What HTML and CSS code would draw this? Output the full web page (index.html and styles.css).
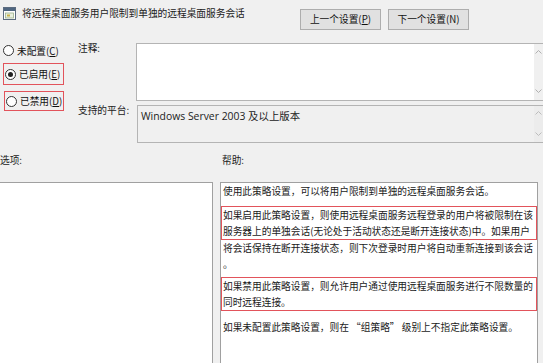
FILE: index.html
```html
<!DOCTYPE html>
<html lang="zh-CN">
<head>
<meta charset="utf-8">
<title>将远程桌面服务用户限制到单独的远程桌面服务会话</title>
<link rel="stylesheet" href="styles.css">
</head>
<body>
<div class="dialog">
  <div class="header">
    <div class="title">
      <svg class="title-icon" width="13" height="13" viewBox="0 0 13 13">
        <rect x="0.5" y="0.5" width="12" height="12" fill="#ffffff" stroke="#5b6b7f"/>
        <rect x="1" y="1" width="11" height="3" fill="#4f6680"/>
        <rect x="2.5" y="6" width="8" height="5" fill="#e8f0e0" stroke="#9bb08a" stroke-width="0.8"/>
        <rect x="4" y="7.5" width="3" height="2" fill="#c8b24a"/>
      </svg>
      <span>将远程桌面服务用户限制到单独的远程桌面服务会话</span>
    </div>
    <div class="buttons">
      <div class="btn">上一个设置(<u>P</u>)</div>
      <div class="btn">下一个设置(N)</div>
    </div>
  </div>

  <div class="top">
    <div class="radios">
      <div class="radio first"><span class="circle"></span><span>未配置(<u>C</u>)</span></div>
      <div class="radio mark-r on"><span class="circle"><span class="dot"></span></span><span>已启用(<u>E</u>)</span></div>
      <div class="radio mark-r third"><span class="circle"></span><span>已禁用(<u>D</u>)</span></div>
    </div>
    <div class="label l-comment">注释:</div>
    <div class="field comment">
      <div class="field-body"></div>
      <div class="scroll">
        <svg width="7" height="4" viewBox="0 0 7 4"><path d="M0.5 3.5 L3.5 0.5 L6.5 3.5" fill="none" stroke="#b0b0b0"/></svg>
        <svg width="7" height="4" viewBox="0 0 7 4"><path d="M0.5 0.5 L3.5 3.5 L6.5 0.5" fill="none" stroke="#b0b0b0"/></svg>
      </div>
    </div>
    <div class="label l-platform">支持的平台:</div>
    <div class="field platform">
      <div class="field-body platform-text">Windows Server 2003 及以上版本</div>
      <div class="scroll">
        <svg width="7" height="4" viewBox="0 0 7 4"><path d="M0.5 3.5 L3.5 0.5 L6.5 3.5" fill="none" stroke="#bcbcbc"/></svg>
        <svg width="7" height="4" viewBox="0 0 7 4"><path d="M0.5 0.5 L3.5 3.5 L6.5 0.5" fill="none" stroke="#bcbcbc"/></svg>
      </div>
    </div>
  </div>

  <div class="section-labels">
    <div class="sec-label">选项:</div>
    <div class="sec-label help-label">帮助:</div>
  </div>

  <div class="bottom">
    <div class="panel options"></div>
    <div class="panel help">
      <div class="line">使用此策略设置，可以将用户限制到单独的远程桌面服务会话。</div>
      <div class="mark m1">
        <div class="line">如果启用此策略设置，则使用远程桌面服务远程登录的用户将被限制在该</div>
        <div class="line">服务器上的单独会话(无论处于活动状态还是断开连接状态)中。如果用户</div>
      </div>
      <div class="line">将会话保持在断开连接状态，则下次登录时用户将自动重新连接到该会话</div>
      <div class="line">。</div>
      <div class="mark m2">
        <div class="line">如果禁用此策略设置，则允许用户通过使用远程桌面服务进行不限数量的</div>
        <div class="line">同时远程连接。</div>
      </div>
      <div class="line last">如果未配置此策略设置，则在 “组策略” 级别上不指定此策略设置。</div>
    </div>
  </div>
</div>
</body>
</html>
```

FILE: styles.css
```css
html, body {
  margin: 0;
  padding: 0;
  background: #f0f0f0;
  overflow: hidden;
}
body {
  font-family: "Noto Sans CJK SC", "Noto Sans", sans-serif;
  font-size: 9.7px;
  color: #1a1a1a;
  width: 543px;
  height: 363px;
}
u { text-decoration: underline; text-underline-offset: 1px; }

.dialog {
  width: 546px;
}

/* header */
.header {
  height: 43px;
  display: flex;
  align-items: flex-start;
}
.title {
  display: flex;
  align-items: center;
  gap: 6px;
  margin: 7px 0 0 3px;
  height: 13px;
  line-height: 13px;
  color: #222;
}
.title-icon { display: block; flex: none; }
.buttons {
  display: flex;
  gap: 7px;
  margin: 9px 77px 0 auto;
}
.btn {
  width: 79px;
  height: 19px;
  line-height: 19px;
  text-align: center;
  background: #e1e1e1;
  border: 1px solid #adadad;
  color: #111;
}

/* top fields */
.top {
  display: grid;
  grid-template-columns: 78px 58px 1fr;
  grid-template-rows: 58px 38px;
  row-gap: 4px;
}
.radios {
  grid-column: 1;
  grid-row: 1 / span 2;
  display: flex;
  flex-direction: column;
}
.radio {
  display: flex;
  align-items: center;
  gap: 3px;
  color: #111;
}
.radio.first {
  height: 15px;
  padding-left: 3px;
}
.mark-r {
  border: 1px solid #e2535b;
  width: 61px;
  margin-left: 3px;
  padding-left: 1px;
  box-sizing: border-box;
}
.radio.on {
  height: 22px;
  margin-top: 5px;
}
.radio.third {
  height: 20px;
  margin-top: 6px;
  margin-left: 4px;
  width: 60px;
}
.circle {
  width: 9px;
  height: 9px;
  border: 1px solid #333;
  border-radius: 50%;
  background: #fff;
  display: flex;
  align-items: center;
  justify-content: center;
  flex: none;
}
.dot {
  width: 5px;
  height: 5px;
  border-radius: 50%;
  background: #222;
}
.label {
  grid-column: 2;
  color: #222;
  line-height: 10px;
}
.l-comment { grid-row: 1; margin-top: 0; }
.l-platform { grid-row: 2; margin-top: 0; }

.field {
  grid-column: 3;
  border: 1px solid #b4b4b4;
  display: flex;
}
.comment {
  grid-row: 1;
  background: #ffffff;
}
.platform {
  grid-row: 2;
  background: #f0f0f0;
  margin-left: 1px;
}
.field-body { flex: 1; }
.platform-text {
  font-family: "Open Sans", "Noto Sans CJK SC", sans-serif;
  font-size: 10.4px;
  color: #222;
  padding: 2px 0 0 3px;
  line-height: 16px;
}
.scroll {
  width: 9px;
  margin-right: 2px;
  background: #f0f0f0;
  display: flex;
  flex-direction: column;
  justify-content: space-between;
  align-items: center;
  padding: 6px 0 7px;
}
.platform .scroll { background: #ececec; padding: 5px 0 6px; }
.scroll svg { display: block; }

/* section labels */
.section-labels {
  display: flex;
  margin-top: 11px;
  height: 12px;
  line-height: 12px;
  color: #222;
}
.sec-label { width: 222px; }
.help-label { width: auto; }

/* bottom panels */
.bottom {
  display: grid;
  grid-template-columns: 214px 318px;
  column-gap: 7px;
  margin-top: 16px;
  margin-left: -1px;
  height: 190px;
}
.panel {
  background: #ffffff;
  border: 1px solid #a0a0a0;
  border-bottom: none;
}
.help {
  white-space: nowrap;
  color: #1a1a1a;
  overflow: hidden;
}
.line {
  height: 16px;
  line-height: 16px;
  padding-left: 2px;
}
.mark {
  border: 1px solid #e2535b;
}
.mark .line { padding-left: 1px; }
.m1 { margin-top: 7px; }
.m2 { margin-top: 5px; }
.last { margin-top: 8px; }
```
